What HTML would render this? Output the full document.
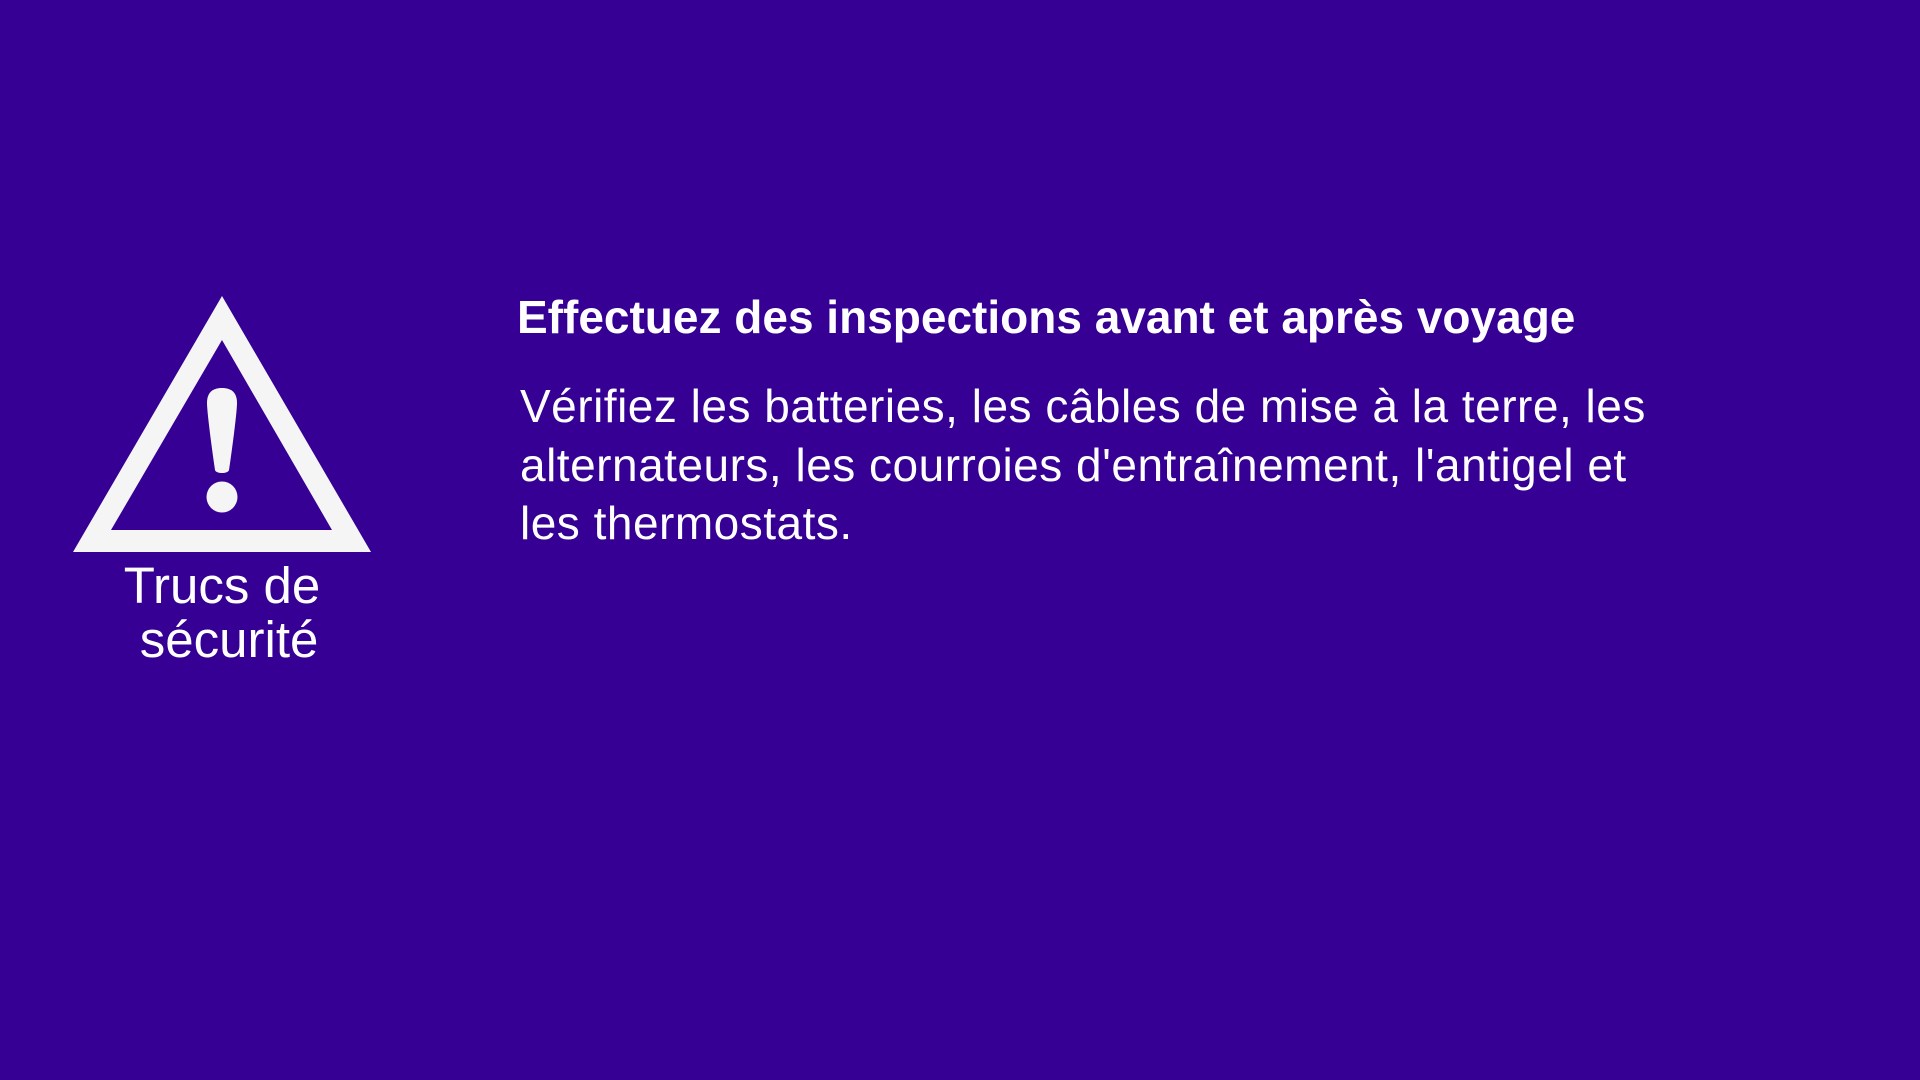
<!DOCTYPE html>
<html><head><meta charset="utf-8"><style>
html,body{margin:0;padding:0;width:1920px;height:1080px;background:#360094;overflow:hidden;font-family:"Liberation Sans",sans-serif;color:#fff}
.t{position:absolute;white-space:nowrap}
</style></head><body>
<svg width="1920" height="1080" style="position:absolute;left:0;top:0">
<path fill-rule="evenodd" fill="#f5f5f5" d="M222 296 L371 552 L73 552 Z M222 340 L111 530 L332 530 Z"/>
<path fill="#f5f5f5" d="M222 388 C212 388 207 393 207 403 C207 412 212 450 215 470 C216 474 228 474 229 470 C232 450 237 412 237 403 C237 393 232 388 222 388 Z"/>
<circle cx="222" cy="497" r="15.5" fill="#f5f5f5"/>
</svg>
<div class="t" style="left:0;width:444px;text-align:center;top:559px;font-size:51px;line-height:54px">Trucs de<br>&nbsp;sécurité</div>
<div class="t" style="left:517px;top:290px;font-size:46px;font-weight:bold;letter-spacing:0px">Effectuez des inspections avant et après voyage</div>
<div class="t" style="left:520px;top:377px;font-size:46px;line-height:58.5px;letter-spacing:0.5px">Vérifiez les batteries, les câbles de mise à la terre, les<br>alternateurs, les courroies d'entraînement, l'antigel et<br>les thermostats.</div>
</body></html>
